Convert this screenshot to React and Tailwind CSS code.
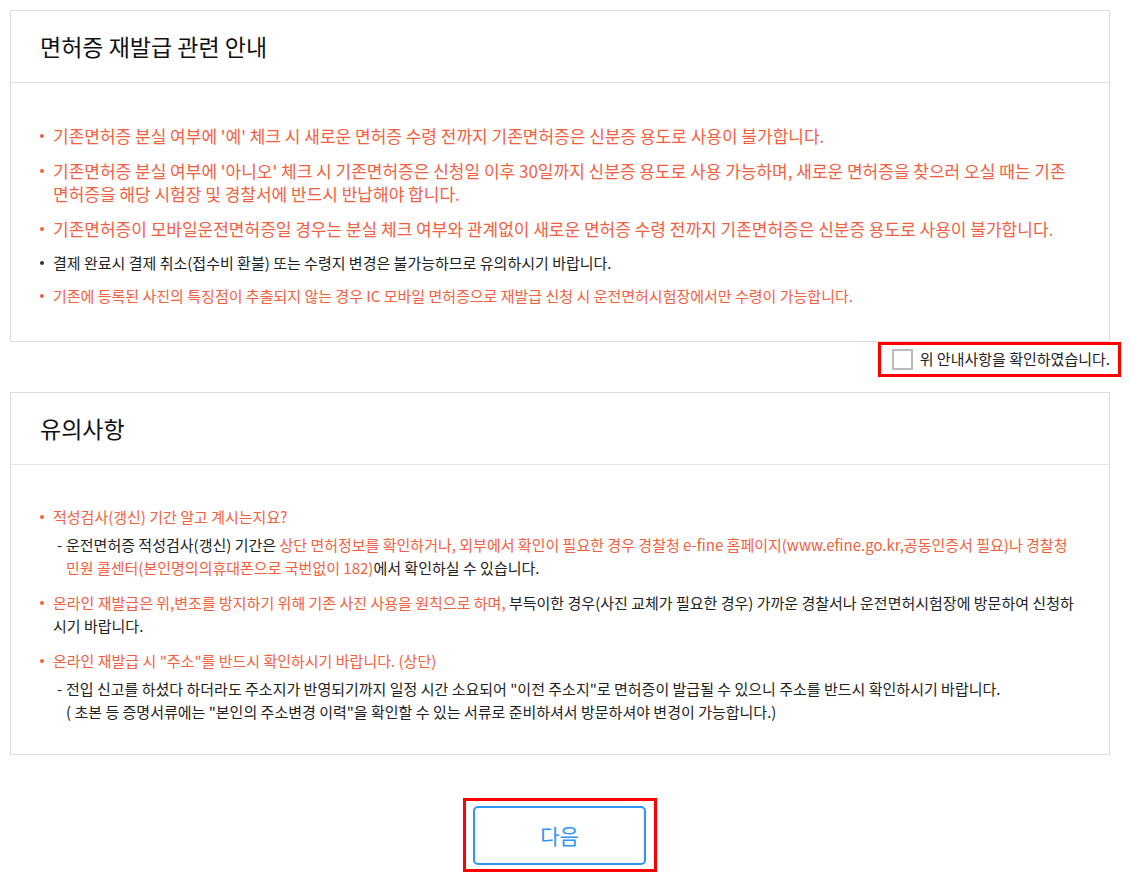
import React from "react";

const O = "text-[#f4603f]";
const K = "text-[#222222]";

function Item({ color = "orange", size = 17, lh = 23, children }) {
  const txt = color === "orange" ? O : K;
  const dot = color === "orange" ? "bg-[#f4603f]" : "bg-[#333333]";
  const sz = size === 17 ? "text-[17px]" : "text-[15px]";
  const lhc = lh === 23 ? "leading-[23px]" : "leading-[21px]";
  return (
    <li className={`flex ${txt} ${sz} ${lhc}`}>
      <span className={`w-[13px] shrink-0 flex items-center ${lh === 23 ? "h-[23px]" : "h-[21px]"}`}>
        <span className={`w-[4px] h-[4px] rounded-full ${dot}`} />
      </span>
      <div className="whitespace-nowrap">{children}</div>
    </li>
  );
}

function Sub({ children }) {
  return (
    <div className={`flex ml-[17px] mt-[5px] text-[15px] leading-[23px] ${K}`}>
      <span className="w-[9px] shrink-0">-</span>
      <div className="whitespace-nowrap">{children}</div>
    </div>
  );
}

function Box({ title, children, bodyClass }) {
  return (
    <section className="mx-[10px] w-[1100px] border border-[#dcdcdc] bg-white">
      <div className="h-[72px] flex items-center pl-[29px] border-b border-[#e3e3e3]">
        <h2 className="text-[23px] text-[#111111]">{title}</h2>
      </div>
      <div className={bodyClass}>{children}</div>
    </section>
  );
}

export default function App() {
  return (
    <div
      className="w-[1130px] bg-white pt-[10px] pb-[9px]"
      style={{ fontFamily: '"Noto Sans CJK KR", "Noto Sans", sans-serif' }}
    >
      <Box title="면허증 재발급 관련 안내" bodyClass="pl-[29px] pr-[8px] pt-[41px] pb-[35px]">
        <ul className="flex flex-col gap-[12px]">
          <Item>
            기존면허증 분실 여부에 '예' 체크 시 새로운 면허증 수령 전까지 기존면허증은 신분증 용도로 사용이 불가합니다.
          </Item>
          <Item>
            기존면허증 분실 여부에 '아니오' 체크 시 기존면허증은 신청일 이후 30일까지 신분증 용도로 사용 가능하며, 새로운 면허증을 찾으러 오실 때는 기존
            <br />
            면허증을 해당 시험장 및 경찰서에 반드시 반납해야 합니다.
          </Item>
          <Item>
            기존면허증이 모바일운전면허증일 경우는 분실 체크 여부와 관계없이 새로운 면허증 수령 전까지 기존면허증은 신분증 용도로 사용이 불가합니다.
          </Item>
          <Item color="black" size={15} lh={21}>
            결제 완료시 결제 취소(접수비 환불) 또는 수령지 변경은 불가능하므로 유의하시기 바랍니다.
          </Item>
          <Item size={15} lh={21}>
            기존에 등록된 사진의 특징점이 추출되지 않는 경우 IC 모바일 면허증으로 재발급 신청 시 운전면허시험장에서만 수령이 가능합니다.
          </Item>
        </ul>
      </Box>

      <div className="flex justify-end pr-[9px]">
        <label className="flex items-center h-[35px] border-[3px] border-[#ff0000] pl-[11px] pr-[8px] gap-[7px] cursor-pointer">
          <span className="w-[21px] h-[21px] border-2 border-[#bbbbbb] bg-white" />
          <span className="text-[15px] text-[#222222]">위 안내사항을 확인하였습니다.</span>
        </label>
      </div>

      <div className="mt-[15px]">
        <Box title="유의사항" bodyClass="pl-[29px] pr-[4px] pt-[40px] pb-[31px]">
          <ul className="flex flex-col gap-[12px]">
            <li>
              <Item size={15}>적성검사(갱신) 기간 알고 계시는지요?</Item>
              <Sub>
                운전면허증 적성검사(갱신) 기간은{" "}
                <span className={O}>
                  상단 면허정보를 확인하거나, 외부에서 확인이 필요한 경우 경찰청 e-fine 홈페이지(www.efine.go.kr,공동인증서 필요)나 경찰청
                  <br />
                  민원 콜센터(본인명의의휴대폰으로 국번없이 182)
                </span>
                에서 확인하실 수 있습니다.
              </Sub>
            </li>
            <Item size={15}>
              온라인 재발급은 위,변조를 방지하기 위해 기존 사진 사용을 원칙으로 하며,
              <span className={K}>
                {" "}부득이한 경우(사진 교체가 필요한 경우) 가까운 경찰서나 운전면허시험장에 방문하여 신청하
                <br />
                시기 바랍니다.
              </span>
            </Item>
            <li>
              <Item size={15}>온라인 재발급 시 "주소"를 반드시 확인하시기 바랍니다. (상단)</Item>
              <Sub>
                전입 신고를 하셨다 하더라도 주소지가 반영되기까지 일정 시간 소요되어 "이전 주소지"로 면허증이 발급될 수 있으니 주소를 반드시 확인하시기 바랍니다.
                <br />
                ( 초본 등 증명서류에는 "본인의 주소변경 이력"을 확인할 수 있는 서류로 준비하셔서 방문하셔야 변경이 가능합니다.)
              </Sub>
            </li>
          </ul>
        </Box>
      </div>

      <div className="w-[1100px] mx-[10px] flex justify-center mt-[43px]">
        <div className="border-[3px] border-[#ff0000] pl-[7px] pr-[8px] pt-[5px] pb-[4px]">
          <button className="w-[173px] h-[59px] border-2 border-[#2e95f5] rounded-[5px] bg-white text-[#2e95f5] text-[21px] flex items-center justify-center">
            다음
          </button>
        </div>
      </div>
    </div>
  );
}
